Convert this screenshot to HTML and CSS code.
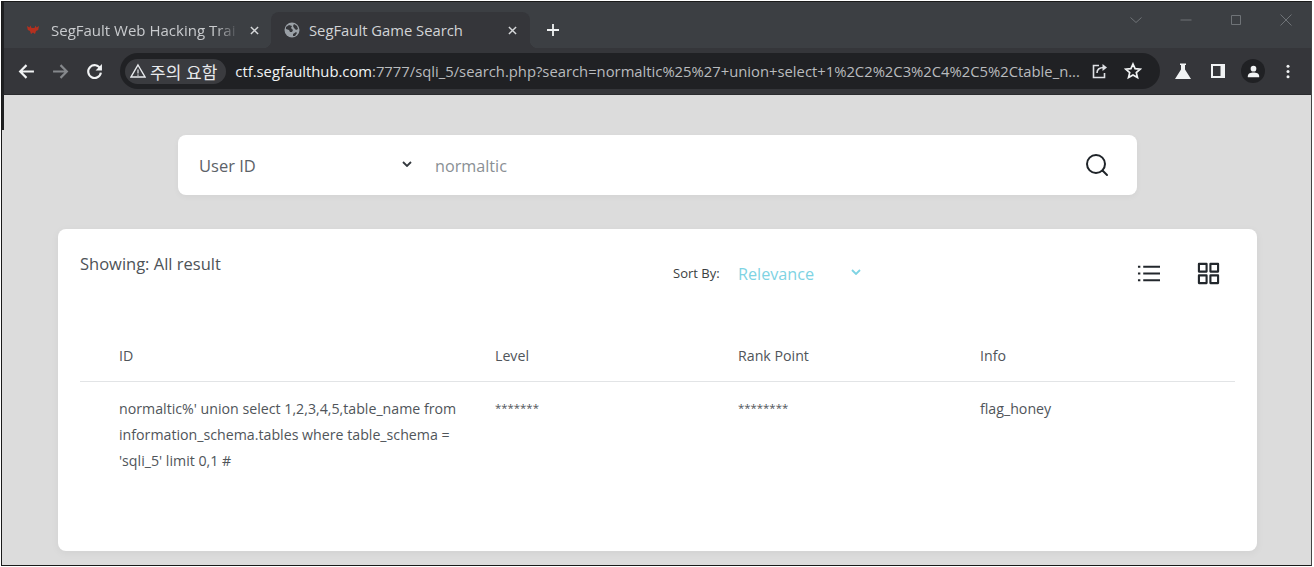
FILE: index.html
```html
<!DOCTYPE html>
<html lang="ko">
<head>
<meta charset="utf-8">
<title>SegFault Game Search</title>
<link rel="stylesheet" href="styles.css">
</head>
<body>
<div class="window">
  <header class="tabstrip">
    <div class="tab">
      <svg class="favicon bat" viewBox="0 0 12 10"><path d="M0 1l2.500 1.500L3.500 0.500 4.500 3h3l1-2.500 1 2L12 1l-.8 4-2.200 1-1 3-2-1.500L4 9 3 6 .8 5z" fill="#b5301f"/></svg>
      <span class="tab-title fade">SegFault Web Hacking Trai</span>
      <svg class="tab-x" viewBox="0 0 10 10"><path d="M1 1l8 8M9 1l-8 8" stroke="#d6d8da" stroke-width="1.6"/></svg>
    </div>
    <div class="tab active">
      <svg class="favicon globe" viewBox="0 0 16 16"><circle cx="8" cy="8" r="7.500" fill="#9aa0a6"/><path d="M2 5l3-2 3 1-1 2 2 2-1 2-2 0-1-2-3-1zM10 2l3 2 1 3-2 1-2-2-1-2zM9 12l3-2 1 1-2 3-2 0z" fill="#35363a"/></svg>
      <span class="tab-title">SegFault Game Search</span>
      <svg class="tab-x" viewBox="0 0 10 10"><path d="M1 1l8 8M9 1l-8 8" stroke="#d6d8da" stroke-width="1.6"/></svg>
    </div>
    <svg class="newtab" viewBox="0 0 14 14"><path d="M7 1v12M1 7h12" stroke="#f1f3f4" stroke-width="1.8"/></svg>
    <div class="winctl">
      <svg viewBox="0 0 14 14" class="ctl"><path d="M1.500 4.500L7 9.500l5.500-5" fill="none" stroke="#6f7377" stroke-width="1"/></svg>
      <svg viewBox="0 0 14 14" class="ctl"><path d="M1.500 7h11" stroke="#6f7377" stroke-width="1"/></svg>
      <svg viewBox="0 0 14 14" class="ctl"><path d="M2.500 2.500h9v9h-9z" fill="none" stroke="#6f7377" stroke-width="1"/></svg>
      <svg viewBox="0 0 14 14" class="ctl"><path d="M1.500 1.500l11 11M12.500 1.500l-11 11" stroke="#6f7377" stroke-width="1"/></svg>
    </div>
  </header>
  <nav class="toolbar">
    <svg class="nav" viewBox="0 0 16 16"><path d="M15 8H2M8 2L2 8l6 6" fill="none" stroke="#f1f3f4" stroke-width="2"/></svg>
    <svg class="nav" viewBox="0 0 16 16"><path d="M1 8h13M8 2l6 6-6 6" fill="none" stroke="#85888c" stroke-width="2"/></svg>
    <svg class="nav" viewBox="0 0 16 16"><path d="M13.500 5.500A6 6 0 1 0 14 9" fill="none" stroke="#f1f3f4" stroke-width="2"/><path d="M15 1v6H9z" fill="#f1f3f4"/></svg>
    <div class="omnibox">
      <div class="chip">
        <svg class="warn" viewBox="0 0 16 16"><path d="M8 2l7 12H1z" fill="none" stroke="#e8eaed" stroke-width="1.400"/><path d="M8 6.500v4M8 11.500v1.300" stroke="#e8eaed" stroke-width="1.200"/></svg>
        <span>주의 요함</span>
      </div>
      <div class="url"><b>ctf.segfaulthub.com</b>:7777/sqli_5/search.php?search=normaltic%25%27+union+select+1%2C2%2C3%2C4%2C5%2Ctable_n...</div>
      <svg class="omni-ico share" viewBox="0 0 18 18"><path d="M8 3.500H2.500v12h11V11" fill="none" stroke="#dfe1e5" stroke-width="1.600"/><path d="M6 11c0-4 3-5.500 7-5.500" fill="none" stroke="#dfe1e5" stroke-width="1.600"/><path d="M11.500 2l4.500 3.500-4.500 3.500z" fill="#dfe1e5"/></svg>
      <svg class="omni-ico star" viewBox="0 0 18 18"><path d="M9 2l2.100 4.700 5.100.5-3.900 3.400 1.200 5L9 13l-4.500 2.600 1.200-5-3.900-3.400 5.100-.5z" fill="none" stroke="#f1f3f4" stroke-width="1.700"/></svg>
    </div>
    <div class="actions">
      <svg class="act flask" viewBox="1 1 16 16"><path d="M6 1.500h6V3h-1v4.500l6 9.500H1l6-9.500V3H6z" fill="#f1f3f4"/></svg>
      <svg class="act panel" viewBox="0 0 18 18"><path d="M2 2h14v14H2z" fill="#f1f3f4"/><path d="M4 4h7.500v10H4z" fill="#35363a"/></svg>
      <span class="avatar"><svg viewBox="0 0 18 18"><circle cx="9" cy="6" r="3" fill="#f1f3f4"/><path d="M3 14c0-3 3-4 6-4s6 1 6 4v1H3z" fill="#f1f3f4"/></svg></span>
      <svg class="act dots" viewBox="0 0 4 16"><circle cx="2" cy="2.500" r="1.600" fill="#f1f3f4"/><circle cx="2" cy="8" r="1.600" fill="#f1f3f4"/><circle cx="2" cy="13.500" r="1.600" fill="#f1f3f4"/></svg>
    </div>
  </nav>
  <main class="page">
    <form class="searchbar">
      <div class="field-select"><span>User ID</span>
        <svg class="chev" viewBox="0 0 10 6"><path d="M1 1l4 4 4-4" fill="none" stroke="#33383d" stroke-width="1.800"/></svg>
      </div>
      <div class="field-input">normaltic</div>
      <svg class="search-ico" viewBox="0 0 24 24"><circle cx="11" cy="11" r="9" fill="none" stroke="#1f2429" stroke-width="2"/><path d="M17.500 17.500L22 22" stroke="#1f2429" stroke-width="2" stroke-linecap="round"/></svg>
    </form>
    <section class="card">
      <div class="card-head">
        <div class="showing">Showing: All result</div>
        <div class="sort">
          <span class="sort-label">Sort By:</span>
          <span class="sort-value">Relevance</span>
          <svg class="sort-chev" viewBox="0 0 10 6"><path d="M1 1l4 4 4-4" fill="none" stroke="#7ed3e3" stroke-width="1.800"/></svg>
        </div>
        <div class="views">
          <svg class="view" viewBox="0 0 24 24"><path d="M6.500 5H24M6.500 12H24M6.500 19H24" stroke="#22272c" stroke-width="2"/><path d="M1 5h2.500M1 12h2.500M1 19h2.500" stroke="#22272c" stroke-width="2"/></svg>
          <svg class="view" viewBox="0 0 24 24"><path d="M2 2h8v8H2zM14 2h8v8h-8zM2 14h8v8H2zM14 14h8v8h-8z" fill="none" stroke="#22272c" stroke-width="2.200" stroke-linejoin="round"/></svg>
        </div>
      </div>
      <table class="results">
        <thead>
          <tr><th class="c-id">ID</th><th class="c-level">Level</th><th class="c-rank">Rank Point</th><th>Info</th></tr>
        </thead>
        <tbody>
          <tr>
            <td>normaltic%' union select 1,2,3,4,5,table_name from information_schema.tables where table_schema = 'sqli_5' limit 0,1 #</td>
            <td class="stars">*******</td>
            <td class="stars">********</td>
            <td>flag_honey</td>
          </tr>
        </tbody>
      </table>
    </section>
  </main>
</div>
</body>
</html>
```
FILE: styles.css
```css
* { box-sizing: border-box; }
html, body { margin: 0; height: 100%; background: #fff; overflow: hidden; }
body { font-family: "Open Sans", "Noto Sans CJK KR", sans-serif; padding: 1px 0 0 1px; }
.window { width: 1311px; height: 565px; display: flex; flex-direction: column; border: 1px solid #1a1a1a; border-right-color: #444; }
.tabstrip { height: 46px; flex: none; display: flex; align-items: flex-end; background: #3c3f43; border-left: 2px solid #1f2022; }
.tab { width: 267px; height: 36px; display: flex; align-items: center; padding: 0 12px 0 23px; color: #c9cbce; font-size: 15px; border-radius: 8px 8px 0 0; }
.tab.active { width: 259px; background: #35363a; color: #d2d4d6; font-size: 14.800px; padding: 0 13px; position: relative; }
.tab.active::before, .tab.active::after { content: ""; position: absolute; bottom: 0; width: 8px; height: 8px; }
.tab.active::before { left: -8px; background: radial-gradient(circle at 0 0, transparent 8px, #35363a 8.500px); }
.tab.active::after { right: -8px; background: radial-gradient(circle at 100% 0, transparent 8px, #35363a 8.500px); }
.favicon { flex: none; }
.favicon.bat { width: 12px; height: 10px; margin-right: 12px; }
.favicon.globe { width: 16px; height: 16px; margin-right: 9px; }
.tab-title { flex: 1; white-space: nowrap; overflow: hidden; }
.tab-title.fade { -webkit-mask-image: linear-gradient(to right, #000 165px, transparent 188px); mask-image: linear-gradient(to right, #000 165px, transparent 188px); }
.tab-x { width: 9px; height: 9px; flex: none; }
.newtab { width: 14px; height: 14px; margin: 0 0 11px 16px; flex: none; }
.winctl { margin-left: auto; align-self: flex-start; display: flex; gap: 36px; padding: 11px 18px 0 0; }
.ctl { width: 14px; height: 14px; display: block; }
.toolbar { height: 47px; flex: none; display: flex; align-items: center; background: #35363a; padding: 0 0 0 14px; border-left: 2px solid #1f2022; border-bottom: 1px solid #2a2b2e; }
.nav { width: 17px; height: 17px; flex: none; margin-right: 17px; }
.omnibox { width: 1040px; height: 36px; flex: none; display: flex; align-items: center; background: #202124; border-radius: 18px; padding: 0 18px 0 5px; }
.chip { height: 25px; display: flex; align-items: center; gap: 4px; background: #3a3b3f; border-radius: 13px; padding: 0 9px 0 5px; color: #e8eaed; font-size: 17px; flex: none; font-family: "Noto Sans CJK KR", sans-serif; }
.warn { width: 16px; height: 16px; flex: none; }
.url { flex: 1; min-width: 0; margin-left: 9px; white-space: nowrap; overflow: hidden; color: #b9bbbe; font-size: 14.800px; }
.url b { font-weight: 400; color: #f1f3f4; }
.omni-ico { width: 18px; height: 18px; flex: none; }
.omni-ico.share { margin-left: 10px; }
.omni-ico.star { margin-left: 15px; }
.actions { display: flex; align-items: center; margin-left: 15px; }
.act { flex: none; }
.flask { width: 16px; height: 16px; margin-right: 18px; }
.panel { width: 18px; height: 18px; margin-right: 14px; }
.avatar { width: 24px; height: 24px; border-radius: 50%; background: #202124; display: flex; align-items: center; justify-content: center; margin-right: 21px; }
.avatar svg { width: 17px; height: 17px; }
.act.dots { width: 4px; height: 15px; }
.page { flex: 1; background: #dcdcdc; padding-top: 40px; display: flex; flex-direction: column; align-items: flex-start; min-height: 0; position: relative; }
.page::before { content: ""; position: absolute; left: 0; top: 0; width: 2px; height: 35px; background: #1f2022; }
.searchbar { width: 959px; height: 60px; flex: none; margin-left: 176px; display: flex; align-items: center; background: #fff; border-radius: 8px; padding: 0 28px 0 21px; box-shadow: 0 2px 6px rgba(0,0,0,.04); }
.field-select { width: 236px; flex: none; display: flex; align-items: center; justify-content: space-between; padding: 1px 23px 0 0; font-size: 16.500px; color: #5c6268; }
.chev { width: 10px; height: 6px; margin-top: -3px; }
.field-input { flex: 1; font-size: 16.200px; color: #8a8f94; padding-top: 2px; }
.search-ico { width: 24px; height: 24px; flex: none; }
.card { width: 1199px; height: 322px; flex: none; margin: 34px 0 0 56px; background: #fff; border-radius: 8px; padding: 24px 22px 0; box-shadow: 0 2px 8px rgba(0,0,0,.05); }
.card-head { display: flex; align-items: flex-start; height: 79px; }
.showing { width: 593px; flex: none; font-size: 16.500px; color: #4e5358; line-height: 22px; }
.sort { display: flex; align-items: center; height: 22px; margin-top: 9px; }
.sort-label { font-size: 13px; color: #3a3e42; width: 65px; }
.sort-value { font-size: 16.200px; color: #7ed3e3; width: 113px; padding-top: 2px; }
.sort-chev { width: 10px; height: 6px; margin-top: -3px; }
.views { margin-left: auto; display: flex; gap: 37px; padding: 9px 15px 0 0; }
.view { width: 23px; height: 23px; }
.results { width: 100%; border-collapse: collapse; table-layout: fixed; font-size: 14.200px; color: #50555a; }
.results th { font-weight: 400; text-align: left; height: 49px; padding: 0 0 2px; border-bottom: 1px solid #e2e4e6; }
.results th:first-child { padding-left: 39px; }
.results td:first-child { padding-left: 39px; }
.c-id { width: 415px; }
.c-level { width: 243px; }
.c-rank { width: 242px; }
.results td { vertical-align: top; padding: 14px 30px 0 0; line-height: 26px; }
.results td.stars { font-size: 11.400px; line-height: 24px; padding-top: 14px; }
```
